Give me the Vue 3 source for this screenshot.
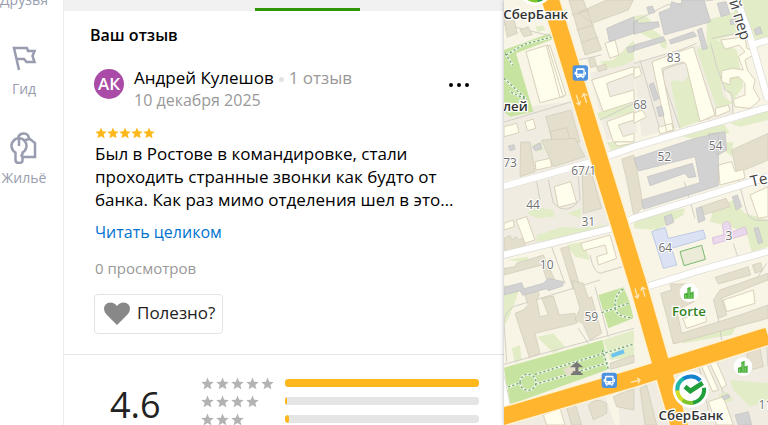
<template>
  <div class="app">
    <nav class="sidebar">
      <a href="#" class="nav-item">Друзья</a>
      <a href="#" class="nav-item">
        <svg class="nav-icon" viewBox="0 0 32 32">
          <path d="M11 27 L6 5 H19 L20 8 H26.500 L24.500 13 L26.500 19 H18.500 L16 16 H8.500" />
        </svg>
        Гид
      </a>
      <a href="#" class="nav-item">
        <svg class="nav-icon" viewBox="0 0 32 32">
          <path d="M10 6 Q11 1.500 16 1.500 Q20.500 1.500 21 7 M17 8 L22 7 L27 11 V25 H14" />
          <path class="key" d="M7.500 28 V20.500 A7.500 7.500 0 1 1 14.500 20.500 V22 L13.500 23.500 L14.500 25 V29 Q14 31 11 31 Q7.500 31 7.500 28 Z M11 7 V14" />
        </svg>
        Жильё
      </a>
    </nav>

    <main class="panel">
      <div class="tabs"><span class="tab-active"></span></div>

      <section class="review">
        <h2 class="title">Ваш отзыв</h2>
        <article class="card">
          <header class="author">
            <span class="avatar">АК</span>
            <div class="author-info">
              <div><span class="name">Андрей Кулешов</span><span class="dot"></span><span class="count">1 отзыв</span></div>
              <div class="date">10 декабря 2025</div>
            </div>
            <button class="more" aria-label="Ещё">
              <svg viewBox="0 0 20 4"><circle cx="2" cy="2" r="2" /><circle cx="10" cy="2" r="2" /><circle cx="18" cy="2" r="2" /></svg>
            </button>
          </header>
          <div class="stars">
            <svg v-for="n in 5" :key="n" viewBox="0 0 24 24"><path :d="star" /></svg>
          </div>
          <p class="text">Был в Ростове в командировке, стали проходить странные звонки как будто от банка. Как раз мимо отделения шел в это…</p>
          <a href="#" class="read-more">Читать целиком</a>
          <div class="views">0 просмотров</div>
          <button class="useful">
            <svg viewBox="0 0 26 24"><path d="M13 23 L2.500 12.500 Q0 9.500 0 7 Q0 1 6.500 0.500 Q10.500 0.500 13 4 Q15.500 0.500 19.500 0.500 Q26 1 26 7 Q26 9.500 23.500 12.500 Z" /></svg>
            <span>Полезно?</span>
          </button>
        </article>
      </section>

      <section class="summary">
        <div class="score">4.6</div>
        <div class="bars">
          <div v-for="row in ratings" :key="row.stars" class="bar-row">
            <div class="bar-stars">
              <svg v-for="n in row.stars" :key="n" viewBox="0 0 24 24"><path :d="star" /></svg>
            </div>
            <div class="track"><div class="fill" :style="{ width: row.percent + '%' }"></div></div>
          </div>
        </div>
      </section>
    </main>

    <div class="map">
      <svg class="map-canvas" viewBox="12 0 792 1275" preserveAspectRatio="xMinYMin slice">
        <rect width="804" height="1275" fill="#f8f4e6" />

        <!-- blocks -->
        <g class="block">
          <path d="M0 330 L250 300 L290 480 L0 545 Z M0 570 L330 490 L350 680 L0 760 Z" />
          <path d="M400 190 L620 130 L700 340 L425 410 Z M270 220 L402 180 L410 400 L320 420 Z" />
          <path d="M350 1150 L530 1100 L804 1020 V1275 H360 Z M0 1275 L300 1150 L345 1275 Z" />
        </g>

        <!-- greenery -->
        <g class="green">
          <path d="M12 150 L150 100 L158 118 L48 160 L100 335 L30 350 L12 335 Z" class="park" />
          <path d="M107 82 Q110 76 130 78 L136 90 L112 96 Z M320 330 L402 310 V336 L300 360 L290 340 Z M300 185 L340 180 L402 120 V180 Q360 205 320 205 Z" />
          <path d="M402 50 Q450 30 460 90 L500 120 V145 Q485 150 480 130 L402 90 Z M620 60 L700 40 L710 0 H804 V115 L770 120 L745 90 L620 130 Z" />
          <path d="M512 250 Q520 235 550 245 Q570 230 565 205 L578 225 L610 360 L540 385 Z M590 150 L640 120 L670 290 L700 310 L650 325 Z M640 115 L710 150 L730 260 L700 300 L640 210 Z" />
          <path d="M500 395 L670 370 L690 400 L570 415 Z M690 370 L804 330 V360 L720 380 Z M650 430 L700 426 L695 470 Z M715 495 L785 460 L780 475 L720 500 Z" />
          <path d="M320 426 L402 426 V440 L335 455 Z M95 436 L125 426 L130 450 L110 455 Z M80 640 Q110 615 160 630 L165 650 L110 655 Z M200 640 L245 625 L240 655 Z" />
          <path d="M110 705 L190 680 L235 685 L320 675 L325 695 L110 725 Z M200 735 L250 725 L270 780 L225 770 Z M20 780 L85 770 L80 790 L30 780 Z" />
          <path d="M402 655 L555 625 L550 645 L470 690 L402 685 Z M640 625 L700 600 L735 640 L804 660 V740 L755 755 L740 700 L690 680 L630 665 Z" />
          <path d="M12 855 L58 870 L28 950 L12 980 Z M112 1010 L160 1000 L195 1040 L160 1060 Z M35 1045 L60 1035 L65 1080 L45 1090 Z M310 1020 L402 990 V1070 L330 1080 Z" />
          <path d="M12 1103 L308 1020 L326 1108 L28 1215 Z M295 885 L370 862 Q392 905 400 955 L325 985 Z" class="park" />
          <path d="M535 1015 L580 1000 Q640 980 708 980 L695 1005 L550 1030 Z M700 1170 L690 1140 L804 1150 V1200 L750 1220 Z M655 1185 L680 1175 L700 1200 L660 1215 Z" />
        </g>

        <!-- minor streets -->
        <g class="lanes">
          <path d="M0 70 L160 110 M235 180 L304 165 M0 370 L215 305 M300 360 L402 310 M110 545 L120 600 M145 540 L160 610 Q200 650 240 600 L235 530" />
          <path d="M402 190 L540 150 L590 130 M490 290 L490 210 Q530 190 580 185 L625 360 M490 240 L540 385 M420 180 L480 390 M632 130 L650 200 L675 270 L695 280 L700 350 M635 115 L710 100 M402 65 L500 15 L640 0" />
          <path d="M553 545 L585 655 M715 540 L740 635 Q750 670 804 660 M700 730 L715 775 M800 790 L760 852 M155 740 L195 852 M270 765 Q280 815 300 820 L402 790" />
          <path d="M20 1085 L12 970 Q10 940 40 920 L300 840 M235 985 L265 1030 M285 860 L325 1010 M12 1093 L402 985 M630 1060 L670 1180 M595 1090 L625 1230 M800 1030 L804 1100 M650 930 L665 1020" />
        </g>

        <!-- houses -->
        <g class="beige">
          <path d="M207 0 L250 0 L305 150 L255 165 Z M235 38 L320 0 H400 L385 30 L275 70 Z M215 45 L268 30 M230 90 L282 75 M243 128 L295 112" />
          <path d="M12 60 L40 48 L52 100 L22 112 Z M60 90 L85 80 L97 104 L72 110 Z M265 178 L283 173 L290 198 L272 203 Z M290 200 L317 192 L320 208 L295 215 Z" />
          <path d="M137 350 L213 330 L240 426 L165 450 Z M150 395 L200 383 L220 450 L165 465 Z" />
          <path d="M62 426 H90 L105 515 L60 530 Z M125 420 L225 415 L255 470 L160 500 Z M247 525 L275 520 L305 625 L250 640 Z" />
          <path d="M12 715 L30 707 L37 718 L48 710 L58 720 L70 712 L75 738 L15 755 Z M12 805 L45 800 L50 790 L130 765 L170 852 H145 L125 795 L12 825 Z M182 745 L205 740 L238 852 L220 870 Z" />
          <path d="M45 940 L70 930 L85 915 L72 880 Q80 865 100 868 Q115 870 118 885 L110 900 L120 950 L145 945 L125 895 L160 888 L178 945 L225 940 L230 970 L105 1000 L120 1060 L88 1073 Z" />
          <path d="M215 842 L250 850 L265 895 L275 890 L305 1000 L270 1020 L248 970 L225 960 L240 925 Z M330 1090 L402 1065 V1088 L332 1108 Z" />
          <path d="M804 480 L710 520 L695 450 L804 400 Z M365 478 L402 465 L418 550 L430 620 L402 650 L380 540 Z" />
          <path d="M602 620 L678 595 L690 620 L610 645 Z M645 832 L745 800 L752 825 L655 852 Z M757 795 L782 788 L788 812 L765 820 Z" />
          <path d="M482 880 L515 870 L510 852 L570 852 L582 905 L530 930 L545 1000 L720 945 L804 915 V955 L520 1032 L500 950 Z M640 900 L660 870 L804 820 V840 L665 895 L680 945 L655 955 Z" />
          <path d="M200 1225 L225 1210 L245 1275 H215 Z M265 1215 Q290 1190 320 1210 L320 1240 L280 1260 Z M340 1190 L402 1165 V1230 L350 1220 Z M420 1165 L440 1155 L470 1275 H435 Z M740 1060 L780 1045 L790 1100 L750 1110 Z" />
        </g>
        <g class="cream">
          <path d="M78 155 L143 135 L190 290 L120 308 Z M140 140 L150 136 L198 285 L180 293 Z M315 130 L345 120 L357 165 L330 175 Z" />
          <path d="M275 240 L402 200 V220 L320 250 L330 290 L402 270 V305 L310 335 Z M320 365 L402 335 V360 L355 375 L370 410 L402 400 V426 H340 Z" />
          <path d="M75 365 L100 357 L107 385 L82 392 Z M12 380 L50 370 L57 398 L12 410 Z" />
          <path d="M456 185 L580 140 L645 345 L600 365 L560 200 Q555 180 540 188 L485 205 L522 390 L500 395 Z M646 325 L685 315 L690 332 L648 350 Z M475 382 L515 370 L520 390 L480 402 Z" />
          <path d="M662 120 L735 110 L740 145 L755 150 L760 165 L735 180 L742 210 L765 240 L760 265 L780 300 L750 325 L703 320 L700 298 L735 285 L735 250 L715 230 L690 235 L690 255 L665 245 L665 212 L700 205 L730 210 L715 170 L735 155 L718 135 L675 148 Z" />
          <path d="M402 205 L418 200 L425 225 L402 235 Z M402 340 L425 330 L440 350 L402 370 Z" />
          <path d="M105 485 L150 475 L155 500 L108 510 Z M163 560 L212 545 L230 608 L175 622 Z M48 660 L80 650 L105 720 L75 730 L60 690 Z M12 670 L40 660 L43 680 L12 690 Z M345 426 L402 426 V430 L350 438 Z" />
          <path d="M242 730 L330 705 L350 775 L295 795 L290 770 L322 760 L315 735 L250 752 Z M655 495 L695 485 L705 515 L730 508 L735 535 L660 555 Z M750 585 L804 560 V650 L775 655 Z" />
          <path d="M548 955 L615 935 L620 965 L560 985 Z M670 900 L760 870 L765 910 L680 935 Z M605 1100 L622 1095 L655 1170 L638 1175 Z M630 1090 L650 1085 L680 1155 L665 1165 Z M625 1205 L670 1190 L700 1275 H650 Z M130 1245 L180 1225 L195 1275 H140 Z" />
        </g>
        <g class="gray">
          <path d="M320 85 L402 50 V100 L328 125 Z M380 143 L402 137 V155 L385 158 Z M477 38 L510 25 L515 5 L545 15 L545 0 H612 L632 65 L493 105 Z M402 65 L412 60 L415 70 L475 65 L478 80 L402 103 Z" />
          <path d="M402 135 L490 110 L495 123 L402 152 Z M508 120 L580 95 L590 108 L512 132 Z M592 90 L605 84 L622 145 L608 150 Z M652 10 L678 5 L690 42 L663 50 Z M763 88 L780 80 L787 100 L768 105 Z M440 22 L457 18 L465 37 L447 42 Z M690 60 L707 56 L710 70 L692 74 Z" />
          <path d="M447 255 L460 248 L477 295 L463 303 Z M470 322 L485 318 L492 346 L477 350 Z" />
          <path d="M402 475 L585 415 L655 400 L655 557 L430 628 L425 600 L600 548 L585 470 L415 513 Z M442 530 L577 490 L588 530 L565 533 L555 520 L450 557 Z M625 402 L675 395 L680 450 L655 465 L640 450 Z" />
          <path d="M588 625 L605 620 L615 660 L595 668 Z M697 590 L712 585 L725 620 L708 630 Z M492 650 L515 643 L521 667 L499 677 Z M762 685 L775 682 L788 727 L775 732 Z" />
          <path d="M12 862 L65 848 L72 866 L130 850 L145 835 L190 845 L188 858 L145 872 L140 866 L68 886 L60 872 L12 885 Z M25 438 L42 434 L45 448 L30 452 Z M98 440 L120 428 L125 446 L105 452 Z M705 1245 L745 1235 L755 1275 H715 Z M665 1190 L685 1182 L690 1192 L672 1200 Z" />
        </g>
        <path d="M455 695 L495 682 L505 715 L610 690 L617 715 L515 745 L530 795 L490 805 Z" fill="#dbe2f4" stroke="#a9b9dd" stroke-width="2" />
        <path d="M637 713 L672 704 L667 675 Q680 655 690 672 L695 697 L735 680 L742 702 L640 733 Z" fill="#ead8ed" stroke="#d5b3da" stroke-width="2" />
        <path d="M540 755 L605 736 L616 778 L552 797 Z" fill="#ebebd7" stroke="#78b96f" stroke-width="3" />
        <path d="M333 1062 L370 1048 L374 1060 L336 1073 Z" fill="#6cc4ef" />

        <!-- park paths -->
        <g class="paths-base"><path v-for="d in paths" :key="d" :d="d" /></g>
        <g class="paths"><path v-for="d in paths" :key="d" :d="d" /></g>

        <!-- white streets -->
        <g class="street-edge"><path v-for="d in streets" :key="d" :d="d" /></g>
        <g class="street"><path v-for="d in streets" :key="d" :d="d" /></g>
        <g class="highway-edge"><path v-for="d in highways" :key="d" :d="d" /></g>
        <g class="highway"><path v-for="d in highways" :key="d" :d="d" /></g>

        <!-- direction arrows -->
        <g class="arrows">
          <path d="M229 285 L238 313 M229 309 L238 314 L242 303 M260 309 L251 281 M246 291 L251 281 L262 286" />
          <path d="M405 865 L413 893 M404 888 L413 894 L417 883 M435 890 L427 862 M422 872 L427 862 L438 867" />
          <path d="M392 1147 L420 1140 M411 1133 L420 1140 L414 1150" />
        </g>

        <!-- bus stops -->
        <g v-for="stop in stops" :key="stop.y" :transform="`translate(${stop.x} ${stop.y})`">
          <rect x="-23" y="-23" width="46" height="46" rx="8" fill="#4d93df" />
          <rect x="-13" y="-14" width="26" height="27" rx="4" fill="#fff" />
          <rect x="-9" y="-9" width="18" height="11" fill="#4d93df" />
          <path d="M-15 -4 V5 M15 -4 V5 M-8 12 V16 M8 12 V16" stroke="#fff" stroke-width="4" />
          <circle cx="-7" cy="7" r="2" fill="#4d93df" /><circle cx="7" cy="7" r="2" fill="#4d93df" />
        </g>

        <!-- gazebo -->
        <path d="M190 1108 L222 1092 L240 1115 L200 1128 Z" fill="#e5dfc9" />
        <path d="M230 1085 L250 1102 H210 Z M226 1100 H235 V1116 H226 Z M218 1114 H243 V1120 H248 V1125 H213 V1120 H218 Z" fill="#777" />

        <!-- office buildings -->
        <g v-for="office in offices" :key="office.x" :transform="`translate(${office.x} ${office.y})`">
          <circle r="28" fill="#fff" />
          <path d="M-15 18 V3 L-5 0 V-14 L5 -18 V0 L14 -4 V18 Z" fill="#4bb13b" />
          <path d="M0 -10 V17 M7 5 V17 M-10 7 V17" stroke="#a4dc95" stroke-width="2" />
        </g>

        <!-- bank logos -->
        <g v-for="bank in banks" :key="bank.y" :transform="`translate(${bank.x} ${bank.y})`">
          <circle r="54" fill="#fff" />
          <g fill="none" stroke-width="12">
            <path d="M-40 4 A40 40 0 0 1 -20 -34" stroke="#20b7a6" />
            <path d="M-22 -33 A40 40 0 0 1 29 -27" stroke="#1683cf" />
            <path d="M-40 2 A40 40 0 0 0 -22 33" stroke="#d3dc24" />
            <path d="M-24 32 A40 40 0 0 0 9 39" stroke="#7fc529" />
            <path d="M7 39 A40 40 0 0 0 40 -6" stroke="#219f3b" />
            <path d="M-17 -9 L-1 4 L36 -20" stroke="#219f3b" stroke-width="14" />
          </g>
        </g>

        <g class="house-number">
          <text v-for="item in houses" :key="item.label" :x="item.x" :y="item.y">{{ item.label }}</text>
        </g>
        <g class="place">
          <text x="107" y="56">СберБанк</text>
          <text x="573" y="1260">СберБанк</text>
          <text x="46" y="334">лей</text>
          <text x="567" y="948" class="forte">Forte</text>
        </g>
        <g class="street-name">
          <text transform="translate(665 -67) rotate(73)">ский пер</text>
          <text transform="translate(755 561) rotate(-13)">Тельмана</text>
        </g>
      </svg>
    </div>
  </div>
</template>

<script setup>
const star = 'M12 1 L15.200 8.600 L23.500 9.300 L17.200 14.600 L19.200 22.700 L12 18.400 L4.800 22.700 L6.800 14.600 L0.500 9.300 L8.800 8.600 Z'

const ratings = [
  { stars: 5, percent: 100 },
  { stars: 4, percent: 1 },
  { stars: 3, percent: 2.5 },
]

const paths = [
  'M18 165 L75 132 L160 110',
  'M15 160 L38 195',
  'M12 235 L82 300 L30 275',
  'M12 1165 L62 1148',
  'M105 1123 L402 1032',
  'M105 1153 L325 1088',
  'M28 1215 L18 1160',
  'M307 1050 L326 1110',
  'M370 868 Q345 880 345 920 Q345 950 392 953',
  'M305 938 L385 910',
  'M60 1147 A24 24 0 1 1 108 1147 A24 24 0 1 1 60 1147',
]

const streets = [
  'M0 562 L260 490 L402 440 L804 322',
  'M0 767 L336 685 L402 655 L804 530',
  'M440 860 L620 805 L804 754',
  'M708 -10 L747 100 L804 300',
  'M755 135 L804 120',
  'M0 1120 L25 1240',
]

const highways = [
  'M145 -20 L182 99 L282 426 L414 852 L483 1092 L540 1285',
  'M0 1252 L402 1134 L804 1008',
]

const stops = [
  { x: 241, y: 219 },
  { x: 328, y: 1141 },
]

const offices = [
  { x: 567, y: 878 },
  { x: 729, y: 1100 },
]

const banks = [
  { x: 106, y: -39 },
  { x: 572, y: 1169 },
]

const houses = [
  { label: '83', x: 521, y: 187 },
  { label: '68', x: 420, y: 327 },
  { label: '73', x: 30, y: 500 },
  { label: '67/1', x: 251, y: 525 },
  { label: '44', x: 99, y: 627 },
  { label: '31', x: 265, y: 678 },
  { label: '10', x: 140, y: 806 },
  { label: '52', x: 493, y: 483 },
  { label: '54', x: 647, y: 451 },
  { label: '64', x: 496, y: 756 },
  { label: '3', x: 687, y: 721 },
  { label: '59', x: 274, y: 962 },
  { label: '11', x: 796, y: 1228 },
]
</script>

<style>
body {
  margin: 0;
  overflow: hidden;
}
</style>

<style scoped>
.app {
  display: flex;
  height: 100vh;
  overflow: hidden;
  background: #fff;
  color: #000;
  font-family: "Open Sans", "Noto Sans", sans-serif;
  font-size: 17px;
}

.sidebar {
  display: flex;
  flex-direction: column;
  flex: 0 0 64px;
  box-sizing: border-box;
  gap: 33px;
  margin-top: -10px;
  border-right: 1px solid #ededed;
}

.nav-item {
  display: flex;
  flex-direction: column;
  align-items: center;
  gap: 4px;
  width: 48px;
  color: #989cae;
  font-size: 14px;
  line-height: 20px;
  text-decoration: none;
}

.nav-icon {
  width: 32px;
  height: 32px;
  fill: none;
  stroke: #989cae;
  stroke-width: 2.5;
}

.key {
  fill: #fff;
}

.panel {
  flex: 0 1 440px;
  min-width: 0;
}

.tabs {
  display: flex;
  justify-content: center;
  align-items: flex-end;
  height: 11px;
  padding-left: 47px;
  background: #f1f1f1;
}

.tab-active {
  width: 105px;
  height: 3px;
  background: #2d9600;
}

.review {
  padding: 12px 32px 20px 26px;
  border-bottom: 1px solid #e5e5e5;
}

.title {
  margin: 0;
  font-size: 16px;
  font-weight: 600;
  line-height: 24px;
}

.card {
  padding: 20px 0 0 5px;
}

.author {
  display: flex;
  align-items: flex-start;
}

.avatar {
  width: 30px;
  margin: 2px 10px 0 -1px;
  border-radius: 50%;
  background: #a94ba7;
  color: #fff;
  font-size: 17px;
  font-weight: 600;
  line-height: 30px;
  text-align: center;
}

.author-info {
  flex: 1;
  line-height: 22px;
}

.name {
  font-weight: 500;
}

.dot {
  display: inline-block;
  width: 5px;
  height: 5px;
  margin: 0 5px;
  border-radius: 50%;
  background: #e2e2e6;
  vertical-align: middle;
}

.count {
  color: #999;
}

.date {
  color: #999;
  font-size: 16px;
}

.more {
  display: flex;
  padding: 16px 3px;
  border: 0;
  background: none;
}

.more svg {
  width: 20px;
  height: 4px;
}

.stars {
  display: flex;
  margin-top: 16px;
}

.stars svg {
  width: 12px;
  height: 12px;
  fill: #ffb81c;
}

.text {
  margin: 3px 0 9px;
  padding-right: 10px;
  line-height: 23px;
}

.read-more {
  display: block;
  color: #0073cf;
  font-size: 16px;
  line-height: 24px;
  text-decoration: none;
}

.views {
  margin: 12px 0 14px;
  color: #999;
  font-size: 15px;
  line-height: 24px;
}

.useful {
  display: flex;
  align-items: center;
  gap: 7px;
  height: 40px;
  margin-left: -1px;
  padding: 0 7px 0 9px;
  border: 1px solid #e3e3e3;
  border-radius: 4px;
  background: #fff;
  color: #222;
  font-family: inherit;
  font-size: 17px;
}

.useful svg {
  width: 26px;
  height: 24px;
  fill: #888;
}

.useful span {
  padding-bottom: 3px;
}

.summary {
  display: flex;
  align-items: flex-start;
  gap: 40px;
  padding: 19px 25px 0 46px;
}

.score {
  color: #222;
  font-size: 36px;
  line-height: 62px;
}

.bars {
  flex: 1;
}

.bar-row {
  display: flex;
  align-items: center;
  height: 18px;
}

.bar-stars {
  display: flex;
  flex: 0 0 84px;
  gap: 2px;
}

.bar-stars svg {
  width: 13px;
  height: 13px;
  fill: #b3b3b3;
}

.track {
  flex: 1;
  height: 8px;
  overflow: hidden;
  border-radius: 3px;
  background: #e5e5e5;
}

.fill {
  height: 8px;
  border-radius: 3px;
  background: #ffb81c;
}

.map {
  flex: 1;
  min-width: 0;
  box-shadow: 0 0 4px rgba(0, 0, 0, 0.3);
}

.map-canvas {
  display: block;
  width: 100%;
  height: 100%;
}

.block {
  fill: #f0ece1;
}

.green {
  fill: #e2edc7;
}

.park {
  fill: #c7e3a0;
}

.lanes {
  fill: none;
  stroke: #d2cfc7;
  stroke-width: 3;
}

.beige {
  fill: #e4decd;
  stroke: #cfc8b5;
  stroke-width: 2;
}

.cream {
  fill: #fffdeb;
  stroke: #d9d1bb;
  stroke-width: 3;
}

.gray {
  fill: #d2d2d2;
  stroke: #c0c0c0;
  stroke-width: 2;
}

.paths-base {
  fill: none;
  stroke: #f4f8ea;
  stroke-width: 7;
}

.paths {
  fill: none;
  stroke: #77a877;
  stroke-width: 4;
  stroke-dasharray: 7 6;
}

.street-edge {
  fill: none;
  stroke: #dcdad4;
  stroke-width: 23;
}

.street {
  fill: none;
  stroke: #fff;
  stroke-width: 19;
}

.highway-edge {
  fill: none;
  stroke: #fff2d5;
  stroke-width: 60;
}

.highway {
  fill: none;
  stroke: #ffb52e;
  stroke-width: 51;
}

.arrows {
  fill: none;
  stroke: #ffe8b8;
  stroke-width: 4;
}

.house-number {
  fill: #707070;
  stroke: #fff;
  stroke-width: 6;
  font-size: 36px;
  paint-order: stroke;
  text-anchor: middle;
}

.place {
  fill: #333;
  stroke: #fff;
  stroke-width: 8;
  font-size: 40px;
  font-weight: 600;
  paint-order: stroke;
  text-anchor: middle;
}

.forte {
  fill: #33831c;
}

.street-name {
  fill: #444;
  stroke: #fff;
  stroke-width: 7;
  font-size: 46px;
  paint-order: stroke;
}
</style>
